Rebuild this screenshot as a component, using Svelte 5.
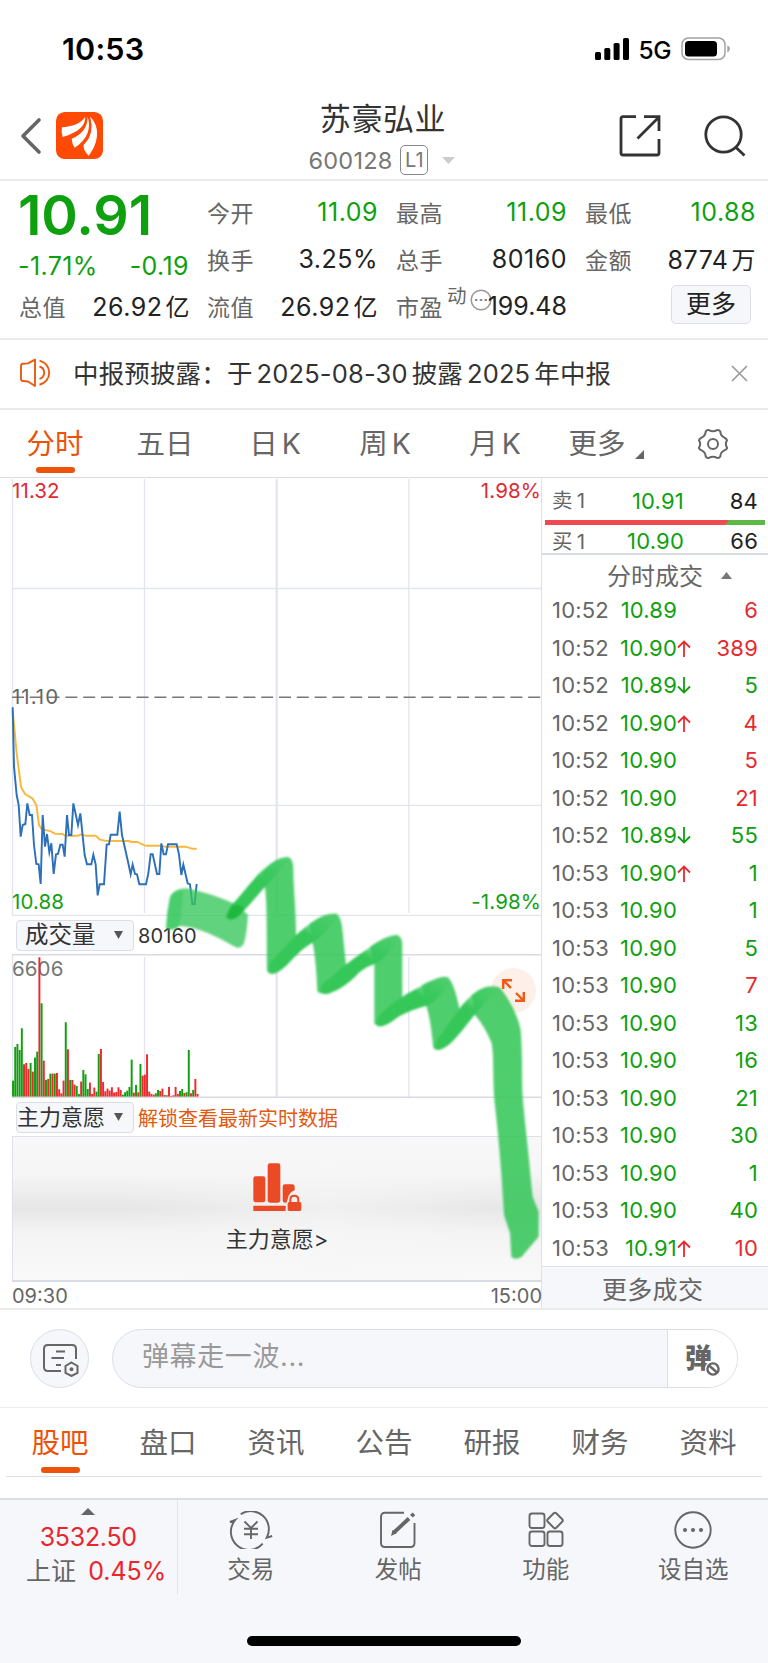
<!-- src/App.svelte -->
<script>
    const quoteRows = [
        [
            { label: '今开', value: '11.09', tone: 'down' },
            { label: '最高', value: '11.09', tone: 'down' },
            { label: '最低', value: '10.88', tone: 'down' },
        ],
        [
            { label: '换手', value: '3.25%' },
            { label: '总手', value: '80160' },
            { label: '金额', value: '8774', unit: '万' },
        ],
    ];

    const periods = [['分时'], ['五日'], ['日', 'K'], ['周', 'K'], ['月', 'K']];
    const sections = ['股吧', '盘口', '资讯', '公告', '研报', '财务', '资料'];

    const trades = [
        ['10:52', '10.89', '', 6, 'up'],
        ['10:52', '10.90', 'up', 389, 'up'],
        ['10:52', '10.89', 'down', 5, 'down'],
        ['10:52', '10.90', 'up', 4, 'up'],
        ['10:52', '10.90', '', 5, 'up'],
        ['10:52', '10.90', '', 21, 'up'],
        ['10:52', '10.89', 'down', 55, 'down'],
        ['10:53', '10.90', 'up', 1, 'down'],
        ['10:53', '10.90', '', 1, 'down'],
        ['10:53', '10.90', '', 5, 'down'],
        ['10:53', '10.90', '', 7, 'up'],
        ['10:53', '10.90', '', 13, 'down'],
        ['10:53', '10.90', '', 16, 'down'],
        ['10:53', '10.90', '', 21, 'down'],
        ['10:53', '10.90', '', 30, 'down'],
        ['10:53', '10.90', '', 1, 'down'],
        ['10:53', '10.90', '', 40, 'down'],
        ['10:53', '10.91', 'up', 10, 'up'],
    ];

    // one entry per minute: g = green, r = red, followed by the bar height
    const volume = (
        'g48 g149 g158 g140 g205 r97 r101 r83 g101 r75 g117 g135 r418 g280 r108 g50 r53 g69 r69 g69 r71 r22 ' +
        'r10 r48 g223 r142 g50 r50 r36 g32 g8 r45 g80 g67 g23 r42 r8 r27 g15 g128 r143 r44 r16 r24 r18 r28 r12 ' +
        'r14 r28 r20 g6 g13 g18 g29 g111 r12 g35 r13 g98 r63 r66 r127 r15 r8 r6 g10 g20 r17 r24 g5 r4 r29 r2 ' +
        'r4 r29 r8 g17 g23 r11 g13 g140 r10 g20 r53 r8'
    ).split(' ').map((bar) => ({ color: bar[0] === 'g' ? '#0fa00f' : '#eb2a2e', h: Number(bar.slice(1)) }));
</script>

<div class="screen">
    <div class="status">
        <span class="clock">10:53</span>
        <div class="signal">
            <svg width="34" height="23" viewBox="0 0 34 23">
                <rect x="0" y="14" width="6" height="8" rx="1.6" />
                <rect x="9.3" y="10" width="6" height="12" rx="1.6" />
                <rect x="18.6" y="5" width="6" height="17" rx="1.6" />
                <rect x="28" y="0" width="6" height="22" rx="1.6" />
            </svg>
            <span class="net">5G</span>
            <svg width="50" height="24" viewBox="0 0 50 24">
                <rect x="1" y="1" width="43" height="21.5" rx="6.5" fill="#fff" stroke="#a3a3a3" stroke-width="1.5" />
                <rect x="4" y="4" width="32" height="15.6" rx="3.6" />
                <path d="M46.3 8.2 Q49 9.5 49 11.8 Q49 14 46.3 15.4Z" fill="#a3a3a3" />
            </svg>
        </div>
    </div>

    <header class="header">
        <svg class="back" width="22" height="38" viewBox="0 0 22 38"><path d="M19 3 L3 19 L19 35" fill="none" stroke="#666" stroke-width="3.6" stroke-linecap="round" stroke-linejoin="round" /></svg>
        <svg class="logo" width="47" height="47" viewBox="0 0 141 141">
            <rect width="141" height="141" rx="26" fill="#fe4a05" />
            <g fill="#fff">
                <path d="M18 46 C48 43 74 36 88 14 C88 42 68 60 20 75 Q15 60 18 46Z" />
                <path d="M47 80 C80 66 94 45 95 14 C106 48 95 82 56 107 Q48 95 47 80Z" />
                <path d="M102 14 C132 42 130 90 98 131 Q80 112 83 98 C106 78 112 45 102 14Z" />
            </g>
        </svg>
        <div class="title">
            <h1>苏豪弘业</h1>
            <div class="code">
                <span>600128</span>
                <span class="level">L1</span>
                <svg width="13" height="7" viewBox="0 0 13 7"><path d="M0 0 H13 L6.5 7Z" fill="#ccc" /></svg>
            </div>
        </div>
        <svg class="share" width="42" height="42" viewBox="0 0 42 42" fill="none" stroke="#333" stroke-width="2.8">
            <path d="M17 1.7 H4 Q2 1.7 2 3.7 V38 Q2 40 4 40 H38 Q40 40 40 38 V24 M25 1.7 H40 V16 M40 2 L18.5 23.5" />
        </svg>
        <svg class="search" width="42" height="42" viewBox="0 0 42 42" fill="none" stroke="#333" stroke-width="2.8">
            <circle cx="19.5" cy="19.5" r="17.7" />
            <path d="M31.5 32 L40.5 40.5" />
        </svg>
    </header>

    <section class="quote">
        <div class="last">
            <strong>10.91</strong>
            <div class="pair down"><span>-1.71%</span><span>-0.19</span></div>
            <div class="cell"><label>总值</label><b>26.92<i>亿</i></b></div>
        </div>
        <div class="stats">
            {#each quoteRows as row}
                {#each row as item}
                    <div class="cell">
                        <label>{item.label}</label>
                        <b class={item.tone}>{item.value}{#if item.unit}<i>{item.unit}</i>{/if}</b>
                    </div>
                {/each}
            {/each}
            <div class="cell"><label>流值</label><b>26.92<i>亿</i></b></div>
            <div class="cell">
                <label class="pe">市盈<sup>动</sup></label>
                <svg class="dots" width="22" height="22" viewBox="0 0 22 22">
                    <circle cx="11" cy="11" r="9.8" fill="none" stroke="#999" stroke-width="1.5" />
                    <path d="M5 11h2.4M9.8 11h2.4M14.6 11h2.4" stroke="#888" stroke-width="2.2" />
                </svg>
                <b class="pe-value">199.48</b>
            </div>
            <div class="cell end"><button class="more">更多</button></div>
        </div>
    </section>

    <section class="notice">
        <svg width="34" height="30" viewBox="0 0 34 30" fill="none" stroke="#ec5a10" stroke-width="1.9" stroke-linejoin="round">
            <path d="M1 8 Q1 6 3 5.8 L8 5.4 L15 1.6 V28 L8 23.5 L3 23 Q1 22.8 1 21Z" />
            <path d="M19.5 2.6 A12.4 12.4 0 0 1 19.5 26.8 M19.5 8.5 A6.4 6.4 0 0 1 19.5 20.8" />
        </svg>
        <p>中报预披露：于<span>2025-08-30</span>披露<span>2025</span>年中报</p>
        <svg class="close" width="17" height="17" viewBox="0 0 17 17"><path d="M1 1 L16 16 M16 1 L1 16" stroke="#999" stroke-width="1.6" /></svg>
    </section>

    <nav class="periods">
        {#each periods as [name, suffix], i}
            <span class="period" class:active={i === 0}>{name}{#if suffix}<em>{suffix}</em>{/if}</span>
        {/each}
        <span class="period other">更多<svg class="corner" width="9" height="9" viewBox="0 0 9 9"><path d="M9 0 V9 H0Z" fill="#666" /></svg></span>
        <svg class="gear" width="32" height="32" viewBox="0 0 32 32" fill="none" stroke="#666" stroke-width="2">
            <circle cx="16" cy="16" r="5" />
            <path stroke-linejoin="round" d="M8.7 3.6 Q9.8 1.6 12 2.2 Q16 4.5 20 2.2 Q22.2 1.6 23.3 3.6 Q23.6 8 27.8 9.8 Q30 11 30 12.4 Q27.6 16 30 19.6 Q30.4 21 27.8 22.2 Q23.6 24 23.3 28.4 Q22.2 30.4 20 29.8 Q16 27.5 12 29.8 Q9.8 30.4 8.7 28.4 Q8.4 24 4.2 22.2 Q1.6 21 2 19.6 Q4.4 16 2 12.4 Q2 11 4.2 9.8 Q8.4 8 8.7 3.6Z" />
        </svg>
    </nav>

    <main class="main">
        <div class="charts">
            <svg class="price" width="542" height="438" viewBox="0 0 542 438">
                <g stroke="#e3e5ee" stroke-width="1.3" fill="none">
                    <path d="M12.5 1 V438 M144.5 1 V435 M408.8 1 V435 M12 110.5 H541 M12 327.3 H541" />
                    <path d="M276.7 1 V435" stroke-width="2.2" />
                    <path d="M12 437.3 H541" />
                </g>
                <path d="M12 219.3 H541" stroke="#777" stroke-width="1.5" stroke-dasharray="12 5.8" />
                <g transform="translate(0 182) scale(.33333)" fill="none" stroke-linejoin="round">
                    <path stroke="#f7b83c" stroke-width="5.8" d="M38 150 L50 280 L63 380 L75 402 L97 415 L109 435 L117 495 L125 508 L150 513 L165 521 L188 522 L195 527 L235 527 L243 523 L257 527 L287 527 L300 539 L315 542 L387 543 L395 546 L413 546 L435 557 L480 557 L495 560 L557 560 L575 566 L590 566" />
                    <path stroke="#2d70b9" stroke-width="5.8" stroke-linejoin="miter" stroke-miterlimit="6" d="M38 142 L42 320 L50 405 L56 435 L62 530 L68 495 L76 492 L82 430 L89 465 L96 465 L102 555 L109 612 L116 613 L122 672 L128 465 L135 560 L141 522 L148 577 L154 550 L161 642 L168 583 L174 582 L181 554 L188 554 L194 590 L201 465 L207 525 L214 525 L220 430 L234 495 L241 460 L254 585 L261 613 L274 613 L280 584 L287 613 L293 706 L299 673 L312 673 L320 554 L327 553 L332 524 L352 524 L359 455 L366 525 L385 610 L392 643 L398 614 L405 642 L411 643 L418 673 L438 673 L445 640 L452 583 L458 583 L471 642 L478 642 L484 550 L491 583 L498 583 L504 553 L530 553 L537 583 L544 645 L550 614 L563 670 L570 673 L577 732 L584 732 L590 672" />
                </g>
                <g class="tick">
                    <text x="12" y="20" fill="#e02a33">11.32</text>
                    <text x="541" y="20" fill="#e02a33" text-anchor="end">1.98%</text>
                    <text class="mid" x="12" y="226" fill="#666">11.10</text>
                    <text x="12" y="431" fill="#14a014">10.88</text>
                    <text x="541" y="431" fill="#14a014" text-anchor="end">-1.98%</text>
                </g>
            </svg>

            <div class="indicator">
                <button class="picker">成交量<svg width="9" height="8" viewBox="0 0 9 8"><path d="M0 0 H9 L4.5 8Z" fill="#555" /></svg></button>
                <span class="vol">80160</span>
            </div>

            <svg class="volume" width="542" height="144" viewBox="0 0 542 144">
                <g stroke="#e3e5ee" stroke-width="1.3">
                    <path d="M12.5 0 V144 M144.5 3 V144 M408.8 3 V144" />
                    <path d="M276.7 3 V144" stroke-width="2.2" />
                    <path d="M12 .8 H541 M12 143.2 H541" stroke="#d9dbe4" stroke-width="1.6" />
                </g>
                <text class="tick" x="12" y="22" fill="#777">6606</text>
                {#each volume as bar, i}
                    <rect x={(36.2 + 6.59 * i) / 3} y={142.6 - bar.h / 3} width="1.95" height={bar.h / 3} fill={bar.color} />
                {/each}
            </svg>

            <div class="indicator">
                <button class="picker tight">主力意愿<svg width="9" height="8" viewBox="0 0 9 8"><path d="M0 0 H9 L4.5 8Z" fill="#555" /></svg></button>
                <span class="unlock">解锁查看最新实时数据</span>
            </div>

            <div class="locked">
                <svg width="49" height="49" viewBox="0 0 147 147" fill="#ea4a26">
                    <rect x="1" y="40" width="36" height="78" rx="7" />
                    <rect x="44" y="1" width="38" height="118" rx="7" />
                    <path d="M89 71 Q89 64 96 64 H118 Q125 64 125 71 V82 Q108 88 105 106 L100 119 H96 Q89 119 89 112Z" />
                    <rect x="1" y="128" width="97" height="16" rx="2" />
                    <path d="M112 118 V110 Q112 98 124 98 Q136 98 136 110 V118" fill="none" stroke="#ea4a26" stroke-width="6" />
                    <rect x="104" y="117" width="41" height="27" rx="5" />
                </svg>
                <span>主力意愿&gt;</span>
            </div>

            <div class="hours"><span>09:30</span><span>15:00</span></div>

            <div class="expand">
                <svg width="23" height="23" viewBox="0 0 23 23" fill="none" stroke="#f05a14" stroke-width="2.4"><path d="M1.2 10 V1.2 H10 M1.5 1.5 L9 9 M21.8 13 V21.8 H13 M21.5 21.5 L14 14" /></svg>
            </div>

            <svg class="marker" width="400" height="440" viewBox="0 0 1200 1320">
                <defs>
                    <filter id="soft"><feGaussianBlur stdDeviation="3" /></filter>
                    <linearGradient id="lift" x1="0" y1="1" x2="1" y2="0">
                        <stop offset=".6" stop-color="#34c759" />
                        <stop offset=".95" stop-color="#34c759" stop-opacity="0" />
                    </linearGradient>
                </defs>
                <g fill="#34c759" filter="url(#soft)">
                    <path fill-opacity=".78" d="M60 170 Q75 145 110 145 C160 155 230 178 265 197 L294 225 Q290 290 280 314 Q268 330 250 318 C200 290 150 262 88 258 Q70 275 48 265 Q50 215 60 170Z" />
                    <path fill-opacity=".45" d="M60 170 Q75 145 100 150 Q96 210 88 258 Q70 275 48 265 Q50 215 60 170Z" />
                    <g fill-opacity=".87">
                        <path d="M345 142 L335 100 Q375 50 415 51 Q430 58 430 85 C430 150 438 200 438 288 L400 365 L376 398 Q360 407 351 393 C350 300 352 200 345 142Z" />
                        <path d="M488 308 L478 252 Q525 217 560 221 Q575 232 578 275 L588 374 L560 440 Q525 468 502 455 C500 400 496 350 488 308Z" />
                        <path d="M673 373 L660 320 Q710 285 742 284 Q757 292 757 315 V470 L735 525 Q700 566 673 552Z" />
                        <path d="M829 498 L815 436 Q870 406 892 411 Q912 425 928 505 L905 575 Q875 635 850 625 C845 580 842 540 829 498Z" />
                        <path d="M973 523 L965 465 Q1010 428 1050 443 C1080 480 1105 530 1112 570 C1118 640 1115 720 1118 770 C1125 850 1140 980 1148 1070 L1166 1115 V1190 Q1140 1220 1115 1250 Q1095 1262 1084 1250 L1080 1180 L1062 1125 C1055 1000 1045 880 1033 780 C1028 700 1032 650 1025 610 Q1005 560 973 523Z" />
                    </g>
                    <g fill="url(#lift)">
                        <path d="M228 230 L240 200 C290 150 330 80 390 55 L425 60 Q385 95 345 140 C320 168 300 195 270 225 Q242 250 228 230Z" />
                        <path d="M354 395 L360 368 C395 335 415 305 438 286 C465 260 500 236 530 223 L570 225 Q530 280 488 308 C465 320 450 335 430 355 Q400 390 378 399 Q362 404 354 395Z" />
                        <path d="M508 456 L520 430 C550 408 570 388 587 374 C620 350 665 315 725 286 L755 290 Q715 350 673 373 C655 378 640 387 625 400 C600 428 570 450 535 461 Q515 465 508 456Z" />
                        <path d="M678 552 L688 525 C715 500 735 485 757 471 C790 448 835 430 880 409 L905 420 Q870 480 828 498 C800 505 770 517 745 530 Q715 555 695 559 Q682 562 678 552Z" />
                        <path d="M853 625 L862 598 C885 570 910 530 928 506 C945 485 980 445 1015 438 L1045 443 Q1010 480 975 523 C955 548 945 562 925 585 Q895 622 870 629 Q857 632 853 625Z" />
                    </g>
                    <path fill="#1fb93c" d="M228 230 L246 197 Q270 190 283 207 L268 225 Q242 248 228 230Z" />
                </g>
            </svg>
        </div>

        <aside class="book">
            <div class="level-row sell"><label>卖<em>1</em></label><span>10.91</span><b>84</b></div>
            <svg class="ratio" width="220" height="5" viewBox="0 0 220 5"><rect width="220" height="5" fill="#ef4a50" /><path d="M184 0 H220 V5 H180Z" fill="#5cb945" /></svg>
            <div class="level-row buy"><label>买<em>1</em></label><span>10.90</span><b>66</b></div>
            <div class="deals-title">分时成交<svg width="11" height="7" viewBox="0 0 11 7"><path d="M0 7 H11 L5.5 0Z" fill="#777" /></svg></div>
            {#each trades as [time, price, move, qty, tone]}
                <div class="trade">
                    <time>{time}</time>
                    <span class="px">{price}</span>
                    <span class="move">
                        {#if move}
                            <svg class={move} width="14" height="17" viewBox="0 0 14 17" fill="none" stroke="currentColor" stroke-width="1.8">
                                <path d={move === 'up' ? 'M7 17 V1.5 M1 7.5 L7 1.5 L13 7.5' : 'M7 0 V15.5 M1 9.5 L7 15.5 L13 9.5'} />
                            </svg>
                        {/if}
                    </span>
                    <b class={tone}>{qty}</b>
                </div>
            {/each}
            <div class="more-deals">更多成交</div>
        </aside>
    </main>

    <section class="danmu">
        <div class="round">
            <svg width="36" height="33" viewBox="0 0 36 33" fill="none" stroke="#666" stroke-width="2">
                <path d="M18 27 H5 Q1 27 1 23 V5 Q1 1 5 1 H29 Q33 1 33 5 V15" />
                <path d="M13 7.5 H22 M8.5 14 H21 M13 21 H18" />
                <path d="M28.5 18.5 L34.5 22 V28.8 L28.5 32 L22.5 28.8 V22Z" />
                <circle cx="28.5" cy="25.3" r="1" />
            </svg>
        </div>
        <div class="pill">
            <span class="placeholder">弹幕走一波...</span>
            <div class="switch">
                <span>弹</span>
                <svg width="16" height="16" viewBox="0 0 16 16"><circle cx="8" cy="8" r="8" fill="#fff" /><circle cx="8" cy="8" r="5.6" fill="#fff" stroke="#666" stroke-width="2.4" /><path d="M4 4.5 L12 11.5" stroke="#666" stroke-width="2.4" /></svg>
            </div>
        </div>
    </section>

    <nav class="sections">
        {#each sections as section, i}
            <span class:active={i === 0}>{section}</span>
        {/each}
    </nav>

    <footer class="footer">
        <div class="index">
            <svg width="14" height="7" viewBox="0 0 14 7"><path d="M0 7 H14 L7 0Z" fill="#666" /></svg>
            <span class="points">3532.50</span>
            <span class="change">上证<b>0.45%</b></span>
        </div>
        <div class="action">
            <svg width="44" height="38" viewBox="0 0 44 38" fill="none" stroke="#666" stroke-width="1.9">
                <path d="M11.7 3.3 A18 18 0 0 1 37.7 26.7 L43.2 25 M33.7 32.7 A18 18 0 0 1 6.3 9 L.8 11" />
                <path d="M15.5 10.5 L22 17 L28.5 10.5 M15 17.8 H29 M15 23.3 H29 M22 17 V28" />
            </svg>
            <span>交易</span>
        </div>
        <div class="action">
            <svg width="36" height="38" viewBox="0 0 36 38" fill="none" stroke="#666" stroke-width="1.9">
                <path d="M24 1.8 H5 Q1 1.8 1 5.8 V32 Q1 36 5 36 H30.5 Q34.5 36 34.5 32 V12" />
                <path d="M14 21.5 L29 7.5 M31.3 5.2 L34 2.8" stroke-width="3.8" />
                <path d="M11 25 L12.5 19 L17 22Z" fill="#666" stroke="none" />
            </svg>
            <span>发帖</span>
        </div>
        <div class="action">
            <svg width="36" height="38" viewBox="0 0 36 38" fill="none" stroke="#666" stroke-width="1.9">
                <rect x="1.5" y="2.5" width="15" height="14.5" rx="2.5" />
                <rect x="1.5" y="20.5" width="15" height="14.5" rx="2.5" />
                <rect x="19.5" y="20.5" width="15" height="14.5" rx="2.5" />
                <rect x="21" y="3.5" width="12" height="12" rx="1.8" transform="rotate(45 27 9.5)" />
            </svg>
            <span>功能</span>
        </div>
        <div class="action">
            <svg width="38" height="38" viewBox="0 0 38 38">
                <circle cx="19" cy="19" r="17.7" fill="none" stroke="#666" stroke-width="1.9" />
                <g fill="#666"><circle cx="11" cy="19" r="2.1" /><circle cx="19" cy="19" r="2.1" /><circle cx="27" cy="19" r="2.1" /></g>
            </svg>
            <span>设自选</span>
        </div>
        <div class="home-bar"></div>
    </footer>
</div>

<style>
    :global(body) {
        margin: 0;
        background: #fff;
    }
    .screen {
        width: 768px;
        height: 1663px;
        overflow: hidden;
        background: #fff;
        color: #222;
        font-family: Inter, 'Noto Sans CJK SC', sans-serif;
        font-weight: 400;
    }
    .screen :global(*) {
        box-sizing: border-box;
    }
    svg {
        display: block;
        flex: none;
    }
    label, b, i, em {
        font-weight: inherit;
        font-style: normal;
    }
    button {
        font-family: inherit;
        padding: 0;
    }
    .down { color: #0fa00f; }
    .up { color: #e8292d; }

    /* status bar */
    .status {
        height: 98px;
        padding: 0 37px 0 62px;
        display: flex;
        justify-content: space-between;
        align-items: center;
        color: #000;
    }
    .clock {
        margin-top: -1px;
        font-size: 30.5px;
        font-weight: 600;
        letter-spacing: 0.2px;
    }
    .signal {
        display: flex;
        align-items: center;
        gap: 10px;
    }
    .net {
        font-size: 24.5px;
        font-weight: 500;
        letter-spacing: -0.5px;
        line-height: 24px;
        padding-top: 2px;
    }

    /* header */
    .header {
        height: 83px;
        display: flex;
        border-bottom: 2px solid #ebebeb;
    }
    .back { margin: 19px 0 0 20px; }
    .logo { margin: 14px 0 0 14px; }
    .title {
        width: 560px;
        margin-left: -1px;
        display: flex;
        flex-direction: column;
        align-items: center;
    }
    h1 {
        margin: 2px 0 0 2px;
        font-size: 31px;
        font-weight: 400;
        line-height: 38px;
        letter-spacing: 0.6px;
        color: #333;
    }
    .code {
        display: flex;
        align-items: center;
        height: 30px;
        margin-top: 7px;
        font-size: 23.5px;
        letter-spacing: 0.2px;
        color: #777;
    }
    .level {
        width: 28px;
        height: 30px;
        margin: 0 14px 0 8px;
        border: 1px solid #888;
        border-radius: 5px;
        font-size: 20px;
        line-height: 28px;
        text-align: center;
    }
    .share { margin: 17px 0 0 -43px; }
    .search { margin: 17px 0 0 43px; }

    /* quote */
    .quote {
        height: 159px;
        display: flex;
        padding: 7px 12px 0 19px;
        border-bottom: 2px solid #ebebeb;
        font-size: 25px;
        letter-spacing: 0.5px;
    }
    .last {
        width: 170px;
        margin-right: 18px;
    }
    .last strong {
        display: block;
        height: 54px;
        margin-left: -1px;
        line-height: 54px;
        font-size: 55.5px;
        font-weight: 600;
        color: #0fa00f;
        letter-spacing: -0.1px;
    }
    .pair {
        display: flex;
        justify-content: space-between;
        height: 40px;
        margin-left: -1px;
        line-height: 49px;
        letter-spacing: 0.4px;
    }
    .stats {
        flex: 1;
        display: grid;
        grid-template-columns: 170px 170px 170px;
        grid-auto-rows: 47px;
        column-gap: 19px;
    }
    .cell {
        display: flex;
        justify-content: space-between;
        align-items: center;
        height: 47px;
        white-space: nowrap;
    }
    .cell > b { margin-right: -1px; }
    .cell label {
        font-size: 23px;
        color: #666;
    }
    .cell i {
        margin-left: 3px;
        font-size: 24px;
    }
    .cell.end { justify-content: flex-end; }
    .pe { position: relative; }
    .pe sup {
        position: absolute;
        left: 51px;
        top: -5px;
        font-size: 19.5px;
        line-height: 24px;
    }
    .dots { margin: -11px -8px 0 24px; }
    .cell > .pe-value { margin-left: 0; letter-spacing: 0; }
    .more {
        width: 80px;
        height: 39px;
        margin: -3px 4px 0 0;
        border: 1px solid #dcdee4;
        border-radius: 5px;
        background: #f6f7fb;
        font-size: 25px;
        line-height: 35px;
        color: #222;
    }

    /* notice */
    .notice {
        height: 70px;
        padding: 0 20px 2px;
        display: flex;
        align-items: center;
        border-bottom: 2px solid #ebebeb;
    }
    .notice p {
        flex: 1;
        margin: -4px 0 0 19px;
        font-size: 25.5px;
        letter-spacing: 0.15px;
        color: #333;
        white-space: nowrap;
    }
    .notice p span { margin: 0 4px; }

    /* period tabs */
    .periods {
        height: 68px;
        display: flex;
        align-items: center;
        border-bottom: 1.5px solid #d9dbe4;
    }
    .period {
        position: relative;
        width: 110px;
        text-align: center;
        font-size: 28.5px;
        line-height: 66px;
        color: #666;
        white-space: nowrap;
    }
    .period em { margin-left: 4px; }
    .period.other { width: 94px; }
    .period.active, .sections .active { color: #ec5208; }
    .period.active::after, .sections .active::after {
        content: '';
        position: absolute;
        left: 50%;
        bottom: 3px;
        width: 39px;
        height: 6px;
        margin-left: -19.5px;
        border-radius: 3px;
        background: #ec5208;
    }
    .period.active::after { bottom: 4px; }
    .corner {
        position: absolute;
        right: 0;
        bottom: 18px;
    }
    .gear { margin-left: 53px; }

    /* charts */
    .main {
        height: 832px;
        display: flex;
        border-bottom: 2px solid #ebebeb;
    }
    .charts {
        position: relative;
        width: 542px;
        border-right: 1.5px solid #dfe1e8;
    }
    .tick {
        font-size: 20.5px;
        letter-spacing: 0.1px;
    }
    .tick .mid { letter-spacing: 1px; }
    .indicator {
        height: 38px;
        display: flex;
        align-items: center;
        padding-left: 16px;
    }
    .picker {
        width: 118px;
        height: 31px;
        padding: 0 10px 0 8px;
        display: flex;
        align-items: center;
        justify-content: space-between;
        border: 1.5px solid #dcdee6;
        border-radius: 4px;
        background: #f6f7fb;
        font-size: 23.5px;
        line-height: 28px;
        color: #333;
        white-space: nowrap;
    }
    .picker.tight {
        padding-left: 0;
        font-size: 22px;
    }
    .vol {
        margin: 2px 0 0 4px;
        font-size: 20px;
        letter-spacing: 0.1px;
        color: #333;
    }
    .unlock {
        margin-left: 4px;
        font-size: 20px;
        color: #e2590f;
    }
    .locked {
        height: 146px;
        margin-left: 12px;
        display: flex;
        flex-direction: column;
        align-items: center;
        padding-top: 26px;
        border-top: 1.5px solid #dfe1e8;
        border-bottom: 2px solid #d9dbe4;
        border-left: 1px solid #dfe1e8;
        background:
            linear-gradient(90deg, rgba(247, 247, 247, 0) 20%, rgba(247, 247, 247, 0.6) 60%, rgba(247, 247, 247, 0) 95%),
            linear-gradient(#f8f8f8, #f6f6f6 25%, #e6e6e7 50%, #f4f4f5 68%, #f9f9f9);
        font-size: 22px;
        line-height: 28px;
        color: #333;
    }
    .locked span { margin-top: 13px; }
    .hours {
        display: flex;
        justify-content: space-between;
        padding-left: 12px;
        margin-right: -1px;
        font-size: 20px;
        line-height: 29px;
        color: #666;
    }
    .expand {
        position: absolute;
        left: 491px;
        top: 490px;
        width: 45px;
        height: 45px;
        padding: 11px;
        border-radius: 50%;
        background: #fdf0e8;
    }
    .marker {
        position: absolute;
        left: 150px;
        top: 362px;
        z-index: 2;
    }

    /* order book */
    .book {
        flex: 1;
        font-size: 22px;
        letter-spacing: 0.2px;
        color: #222;
    }
    .level-row {
        display: flex;
        padding: 0 10px 0 10px;
        color: #666;
    }
    .level-row span {
        width: 98px;
        text-align: right;
        color: #0fa00f;
    }
    .level-row label { width: 34px; font-size: 20.5px; }
    .level-row em { margin-left: 4px; }
    .level-row b {
        flex: 1;
        text-align: right;
        color: #222;
    }
    .sell { height: 41.5px; line-height: 46px; }
    .buy { height: 30.5px; line-height: 33px; border-bottom: 2px solid #d9dbe4; }
    .ratio { margin-left: 3px; }
    .deals-title {
        display: flex;
        align-items: center;
        height: 36px;
        padding: 3px 0 0 65px;
        font-size: 24px;
        letter-spacing: 0;
        color: #666;
    }
    .deals-title svg { margin: 2px 0 0 18px; }
    .trade {
        display: flex;
        height: 37.5px;
        line-height: 39.5px;
        padding: 0 10px 0 10px;
    }
    .trade time {
        width: 66px;
        color: #666;
    }
    .px {
        width: 59px;
        text-align: right;
        color: #0fa00f;
    }
    .move {
        width: 15px;
        display: flex;
        align-items: center;
        padding: 2px 0 0 0;
    }
    .trade b {
        flex: 1;
        text-align: right;
    }
    .more-deals {
        height: 42px;
        border-top: 1.5px solid #dfe1e8;
        background: #f6f7fb;
        padding-left: 60px;
        font-size: 25px;
        line-height: 46px;
        letter-spacing: 0.3px;
        color: #666;
    }

    /* danmu input */
    .danmu {
        height: 98px;
        display: flex;
        padding: 19px 30px 0;
        gap: 23px;
        border-bottom: 1px solid #ededf0;
    }
    .round {
        width: 59px;
        height: 59px;
        padding: 14px 0 0 12px;
        border: 1px solid #dcdee6;
        border-radius: 50%;
        background: #f6f7fb;
    }
    .pill {
        width: 626px;
        height: 59px;
        display: flex;
        justify-content: space-between;
        border: 1px solid #dcdee6;
        border-radius: 30px;
        background: #f6f7fb;
        overflow: hidden;
    }
    .placeholder {
        padding-left: 29px;
        font-size: 27px;
        line-height: 53px;
        letter-spacing: 0.6px;
        color: #999;
    }
    .switch {
        position: relative;
        width: 70px;
        padding-left: 17px;
        border-left: 1px solid #dcdee6;
        background: #fff;
        font-size: 27px;
        font-weight: 900;
        line-height: 57px;
        color: #666;
    }
    .switch svg {
        position: absolute;
        left: 37px;
        top: 31px;
    }

    /* section tabs */
    .sections {
        height: 69px;
        margin: 0 6px;
        display: flex;
        border-bottom: 1px solid #dcdee6;
    }
    .sections span {
        position: relative;
        width: 108px;
        text-align: center;
        font-size: 28.5px;
        line-height: 70px;
        color: #666;
    }

    /* footer */
    .footer {
        height: 167px;
        margin-top: 21px;
        position: relative;
        display: flex;
        border-top: 2px solid #dcdee6;
        background: #f6f7fb;
        color: #666;
    }
    .index {
        width: 177.5px;
        height: 95px;
        display: flex;
        flex-direction: column;
        align-items: center;
        padding-top: 8px;
        border-right: 1.5px solid #e3e5ec;
        font-size: 25px;
        line-height: 34px;
    }
    .points { margin-top: 5px; letter-spacing: -0.3px; color: #eb2529; }
    .change { margin-left: 16px; }
    .change b { margin-left: 12px; color: #eb2529; }
    .action {
        width: 147.5px;
        display: flex;
        flex-direction: column;
        align-items: center;
        padding: 11px 1px 0 0;
        font-size: 23.5px;
        line-height: 34px;
    }
    .action span { margin-top: 4px; }
    .home-bar {
        position: absolute;
        left: 247px;
        top: 136px;
        width: 274px;
        height: 10px;
        border-radius: 5px;
        background: #000;
    }
</style>
